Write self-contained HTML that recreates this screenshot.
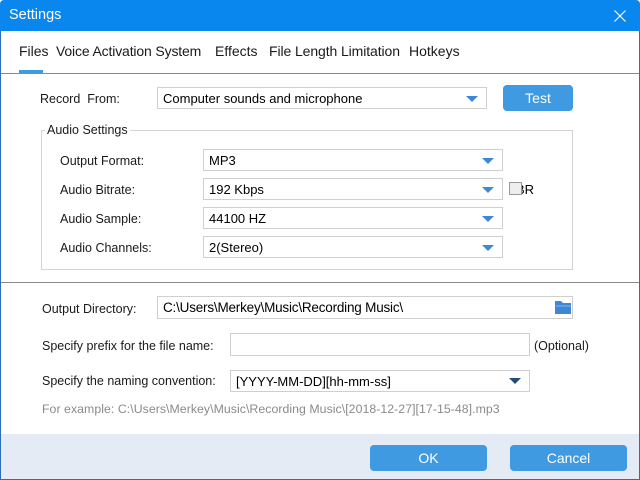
<!DOCTYPE html>
<html><head><meta charset="utf-8"><style>
*{margin:0;padding:0;box-sizing:border-box}
body{width:640px;height:480px;overflow:hidden;background:#fff;font-family:"Liberation Sans",sans-serif;font-size:12px;color:#1a1a1a;position:relative}
.a{position:absolute;white-space:nowrap}
.box{position:absolute;border:1px solid #cfcfcf;background:#fff;padding-left:5px;display:flex;align-items:center;font-size:13px;color:#000}
.arr{position:absolute;right:8px;top:8px;width:0;height:0;border-left:6px solid transparent;border-right:6px solid transparent;border-top:6px solid #3d87d6}
.btn{position:absolute;background:#3f9ae2;color:#fff;border-radius:4px;font-size:14px;display:flex;align-items:center;justify-content:center}
.lab{position:absolute;font-size:12.5px;color:#1a1a1a;white-space:nowrap}
</style></head><body>
<div class="a" style="left:0;top:0;width:640px;height:31px;background:#0a86ef;border-radius:4px 4px 0 0"></div>
<div class="a" style="left:9px;top:7px;color:#fff;font-size:14.5px">Settings</div>
<svg class="a" style="left:614px;top:10px" width="12" height="12"><path d="M0.5 0.5L11.5 11.5M11.5 0.5L0.5 11.5" stroke="#fff" stroke-width="1.1"/></svg>
<div class="a" style="left:0;top:31px;width:1px;height:449px;background:#2e6db8"></div>
<div class="a" style="right:0;top:31px;width:1px;height:449px;background:#2e6db8"></div>
<div class="a" style="left:0;bottom:0;width:640px;height:1px;background:#2e6db8"></div>

<div class="a" style="top:43px;left:19px;font-size:14px">Files</div>
<div class="a" style="top:43px;left:56px;font-size:14px;letter-spacing:-0.15px">Voice Activation System</div>
<div class="a" style="top:43px;left:215px;font-size:14px">Effects</div>
<div class="a" style="top:43px;left:269px;font-size:14px;letter-spacing:-0.1px">File Length Limitation</div>
<div class="a" style="top:43px;left:409px;font-size:14px">Hotkeys</div>
<div class="a" style="top:70px;left:19px;width:24px;height:3px;background:#3f9ae2"></div>
<div class="a" style="top:73px;left:1px;width:638px;height:1px;background:#8a8a8a"></div>

<div class="lab" style="left:40px;top:92px">Record&nbsp; From:</div>
<div class="box" style="left:157px;top:87px;width:330px;height:22px">Computer sounds and microphone<div class="arr"></div></div>
<div class="btn" style="left:503px;top:85px;width:70px;height:26px">Test</div>

<div class="a" style="left:41px;top:130px;width:532px;height:140px;border:1px solid #d4d4d4"></div>
<div class="a" style="left:45px;top:123px;background:#fff;padding:0 2px;font-size:12.5px">Audio Settings</div>
<div class="lab" style="left:60px;top:154px">Output Format:</div>
<div class="lab" style="left:60px;top:183px">Audio Bitrate:</div>
<div class="lab" style="left:60px;top:212px">Audio Sample:</div>
<div class="lab" style="left:60px;top:241px">Audio Channels:</div>
<div class="box" style="left:203px;top:149px;width:300px;height:22px">MP3<div class="arr"></div></div>
<div class="box" style="left:203px;top:178px;width:300px;height:22px">192 Kbps<div class="arr"></div></div>
<div class="box" style="left:203px;top:207px;width:300px;height:22px">44100 HZ<div class="arr"></div></div>
<div class="box" style="left:203px;top:236px;width:300px;height:22px">2(Stereo)<div class="arr"></div></div>
<div class="a" style="left:516px;top:182px;font-size:13px;color:#000">BR</div>
<div class="a" style="left:509px;top:182px;width:13px;height:13px;border:1px solid #999;background:#eee"></div>

<div class="a" style="top:282px;left:1px;width:638px;height:1px;background:#8a8a8a"></div>

<div class="lab" style="left:42px;top:302px">Output Directory:</div>
<div class="box" style="left:157px;top:296px;width:416px;height:23px;font-size:13.5px;letter-spacing:-0.2px">C:\Users\Merkey\Music\Recording Music\</div>
<svg class="a" style="left:555px;top:300px" width="16" height="14"><path d="M0 1h6l2 2h8v11H0z" fill="#3d87d6"/><path d="M1 6h15" stroke="#fff" stroke-width="0.8" opacity=".5"/></svg>
<div class="lab" style="left:42px;top:339px">Specify prefix for the file name:</div>
<div class="box" style="left:230px;top:333px;width:300px;height:23px"></div>
<div class="a" style="left:534px;top:339px;font-size:12.5px">(Optional)</div>
<div class="lab" style="left:42px;top:374px">Specify the naming convention:</div>
<div class="box" style="left:230px;top:370px;width:300px;height:22px">[YYYY-MM-DD][hh-mm-ss]<div class="arr" style="border-top-color:#1f4d78;top:7px"></div></div>
<div class="a" style="left:42px;top:402px;color:#8a8a8a;font-size:12.3px;letter-spacing:0.05px">For example: C:\Users\Merkey\Music\Recording Music\[2018-12-27][17-15-48].mp3</div>

<div class="a" style="left:1px;top:434px;width:638px;height:45px;background:#e5ebf5"></div>
<div class="btn" style="left:370px;top:445px;width:117px;height:26px">OK</div>
<div class="btn" style="left:510px;top:445px;width:117px;height:26px">Cancel</div>
</body></html>
